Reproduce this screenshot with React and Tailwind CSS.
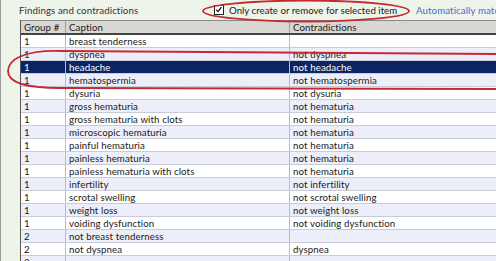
const rows = [
  ["1", "breast tenderness", ""],
  ["1", "dyspnea", "not dyspnea"],
  ["1", "headache", "not headache"],
  ["1", "hematospermia", "not hematospermia"],
  ["1", "dysuria", "not dysuria"],
  ["1", "gross hematuria", "not hematuria"],
  ["1", "gross hematuria with clots", "not hematuria"],
  ["1", "microscopic hematuria", "not hematuria"],
  ["1", "painful hematuria", "not hematuria"],
  ["1", "painless hematuria", "not hematuria"],
  ["1", "painless hematuria with clots", "not hematuria"],
  ["1", "infertility", "not infertility"],
  ["1", "scrotal swelling", "not scrotal swelling"],
  ["1", "weight loss", "not weight loss"],
  ["1", "voiding dysfunction", "not voiding dysfunction"],
  ["2", "not breast tenderness", ""],
  ["2", "not dyspnea", "dyspnea"],
  ["2", "", ""],
];

function Row({ row, i }) {
  const selected = i === 2;
  let bg = i % 2 === 1 ? "bg-[#eceffa]" : "bg-white";
  if (selected) bg = "bg-[#0b2563] text-white";
  return (
    <div className={`flex h-[13px] border-b border-[#c9cbd6] ${bg}`}>
      <div className="w-[45px] shrink-0 border-r border-[#b9bbc4] pl-[3px] leading-[12px]">{row[0]}</div>
      <div className="w-[224px] shrink-0 border-r border-[#b9bbc4] pl-[3px] leading-[12px]">{row[1]}</div>
      <div className="flex-1 pl-[3px] leading-[12px] whitespace-nowrap">{row[2]}</div>
    </div>
  );
}

export default function App() {
  return (
    <div className="relative w-[496px] h-[261px] overflow-hidden bg-[#eef4ea] border-l border-[#9a9a9a] font-['Lato',sans-serif] text-[9.7px] tracking-[0.1px] text-[#1a1a1a]">
      <div className="flex items-center h-[20px] pl-[18px] whitespace-nowrap">
        <span className="w-[195px] shrink-0 text-[#333]">Findings and contradictions</span>
        <span className="w-[202px] shrink-0 flex items-center">
          <span className="relative w-[10px] h-[10px] border border-[#222] bg-white">
            <svg viewBox="0 0 10 10" className="absolute inset-0 w-[8px] h-[8px]">
              <path d="M1.5 4.5 L3.8 7 L8 1.5" stroke="#111" strokeWidth="1.6" fill="none" />
            </svg>
          </span>
          <span className="ml-[5px] tracking-normal">Only create or remove for selected item</span>
        </span>
        <span className="text-[#3b6fd6]">Automatically match</span>
      </div>
      <div className="ml-[19px] border-l border-[#555]">
        <div className="flex h-[15px] bg-[#d9d7d2] border-t border-[#8a8a8a] border-b-2 border-b-[#444]">
          <div className="w-[45px] shrink-0 border-r border-[#a0a0a0] pl-[3px] leading-[12px]">Group #</div>
          <div className="w-[224px] shrink-0 border-r border-[#a0a0a0] pl-[3px] leading-[12px]">Caption</div>
          <div className="flex-1 pl-[3px] leading-[12px]">Contradictions</div>
        </div>
        {rows.map((row, i) => (
          <Row key={i} row={row} i={i} />
        ))}
      </div>
      <svg className="absolute inset-0 pointer-events-none" width="496" height="261" viewBox="0 0 496 261">
        <ellipse cx="305" cy="11" rx="103" ry="10.5" fill="none" stroke="#c42a30" strokeWidth="1.8" />
        <path d="M496 54 L60 51 C22 50 7 60 7 71 C7 82 22 88 60 88 L496 89" fill="none" stroke="#c42a30" strokeWidth="1.8" />
      </svg>
    </div>
  );
}
